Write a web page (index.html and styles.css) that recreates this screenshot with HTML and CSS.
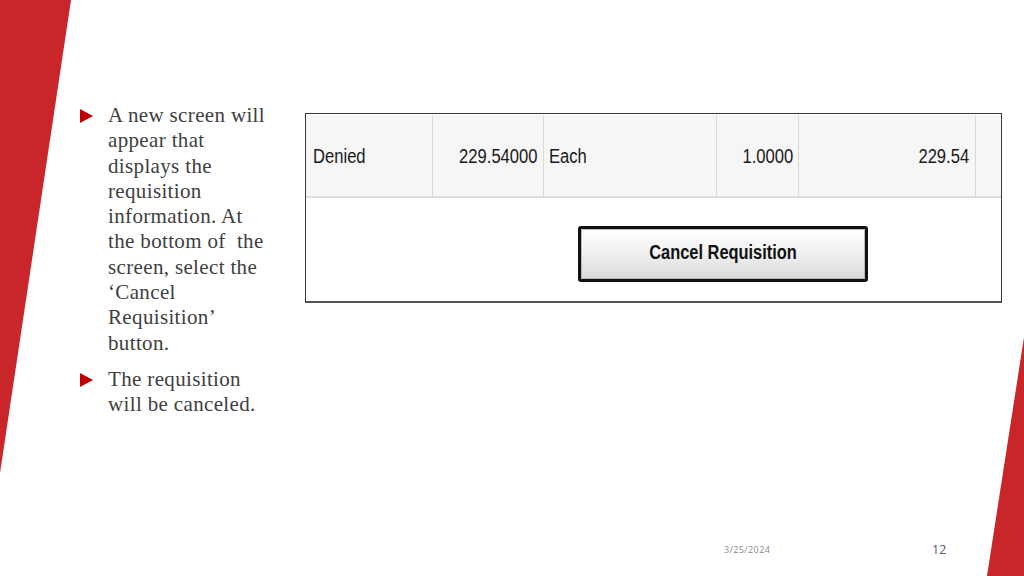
FILE: index.html
```html
<!DOCTYPE html>
<html lang="en">
<head>
<meta charset="utf-8">
<title>Cancel Requisition</title>
<link rel="stylesheet" href="styles.css">
</head>
<body>
<div class="slide">
  <svg class="deco" width="1024" height="576" viewBox="0 0 1024 576" aria-hidden="true">
    <polygon points="0,0 71,0 0,473" fill="#c8262b"/>
    <polygon points="1024,337 1024,576 987,576" fill="#c8262b"/>
  </svg>
  <div class="main">
    <ul class="bullets">
      <li>A new screen will<br>appear that<br>displays the<br>requisition<br>information. At<br>the bottom of&nbsp; the<br>screen, select the<br>‘Cancel<br>Requisition’<br>button.</li>
      <li>The requisition<br>will be canceled.</li>
    </ul>
    <div class="shot">
      <div class="row">
        <div class="cell c1"><span class="cond">Denied</span></div>
        <div class="cell c2 num"><span class="cond r">229.54000</span></div>
        <div class="cell c3"><span class="cond">Each</span></div>
        <div class="cell c4 num"><span class="cond r">1.0000</span></div>
        <div class="cell c5 num"><span class="cond r">229.54</span></div>
        <div class="cell c6"></div>
      </div>
      <div class="actions">
        <div class="btn"><span class="cond c">Cancel Requisition</span></div>
      </div>
    </div>
  </div>
  <div class="footer">
    <span class="date">3/25/2024</span>
    <span class="page">12</span>
  </div>
</div>
</body>
</html>
```
FILE: styles.css
```css
html, body {
  margin: 0;
  padding: 0;
  background: #ffffff;
}

.slide {
  position: relative;
  width: 1024px;
  height: 576px;
  overflow: hidden;
  background: #ffffff;
  display: flex;
  flex-direction: column;
}

.deco {
  position: absolute;
  left: 0;
  top: 0;
  pointer-events: none;
}

.main {
  display: flex;
  align-items: flex-start;
  padding: 103px 0 0 80px;
}

.bullets {
  list-style: none;
  margin: 0;
  padding: 0;
  width: 212px;
  font-family: "Liberation Serif", "DejaVu Serif", serif;
  font-size: 21px;
  line-height: 25.3px;
  letter-spacing: 0.35px;
  color: #404040;
  white-space: nowrap;
}

.bullets li {
  position: relative;
  padding-left: 28px;
  margin-bottom: 11px;
}

.bullets li::before {
  content: "";
  position: absolute;
  left: 0;
  top: 6px;
  width: 0;
  height: 0;
  border-top: 7px solid transparent;
  border-bottom: 7px solid transparent;
  border-left: 13px solid #c00000;
}

.shot {
  margin-top: 10px;
  margin-left: 13px;
  width: 695px;
  height: 187px;
  border: 1px solid #3a3a3a;
  border-bottom: 2px solid #555555;
  display: flex;
  flex-direction: column;
  font-family: "Liberation Sans", Arial, sans-serif;
  color: #1a1a1a;
}

.row {
  display: flex;
  height: 81px;
  border-top: 1px solid #ffffff;
  border-bottom: 2px solid #dcdcdc;
  background: #f6f6f6;
}

.cell {
  display: flex;
  align-items: center;
  border-right: 1px solid #d9d9d9;
  font-size: 20px;
  box-sizing: border-box;
  padding-top: 2px;
}

.cell.num {
  justify-content: flex-end;
}

.c1 { width: 127px; padding-left: 7px; }
.c2 { width: 111px; padding-right: 5px; }
.c3 { width: 173px; padding-left: 5px; }
.c4 { width: 82px; padding-right: 5px; }
.c5 { width: 177px; padding-right: 6px; }
.c6 { width: 25px; border-right: none; }

.cond {
  display: inline-block;
  transform: scaleX(0.83);
  transform-origin: left center;
  white-space: nowrap;
}

.cond.r {
  transform-origin: right center;
}

.cond.c {
  transform: scaleX(0.82);
  transform-origin: center center;
}

.actions {
  padding: 28px 0 0 272px;
}

.btn {
  width: 290px;
  height: 56px;
  box-sizing: border-box;
  border: 3px solid #111111;
  border-radius: 3px;
  background: linear-gradient(#fefefe 0%, #f2f2f2 45%, #d9d9d9 100%);
  box-shadow: inset 0 0 0 1px #b8b8b8;
  display: flex;
  align-items: center;
  justify-content: center;
  font-size: 20px;
  font-weight: bold;
  color: #111111;
  padding-bottom: 3px;
}

.footer {
  margin-top: auto;
  display: flex;
  align-items: center;
  height: 20px;
  padding: 0 0 17px 724px;
  font-family: "Open Sans", "Noto Sans", sans-serif;
  position: relative;
}

.date {
  font-size: 9px;
  letter-spacing: 0.4px;
  color: #8a8a8a;
  width: 208px;
}

.page {
  font-size: 12.5px;
  color: #595959;
}
```
